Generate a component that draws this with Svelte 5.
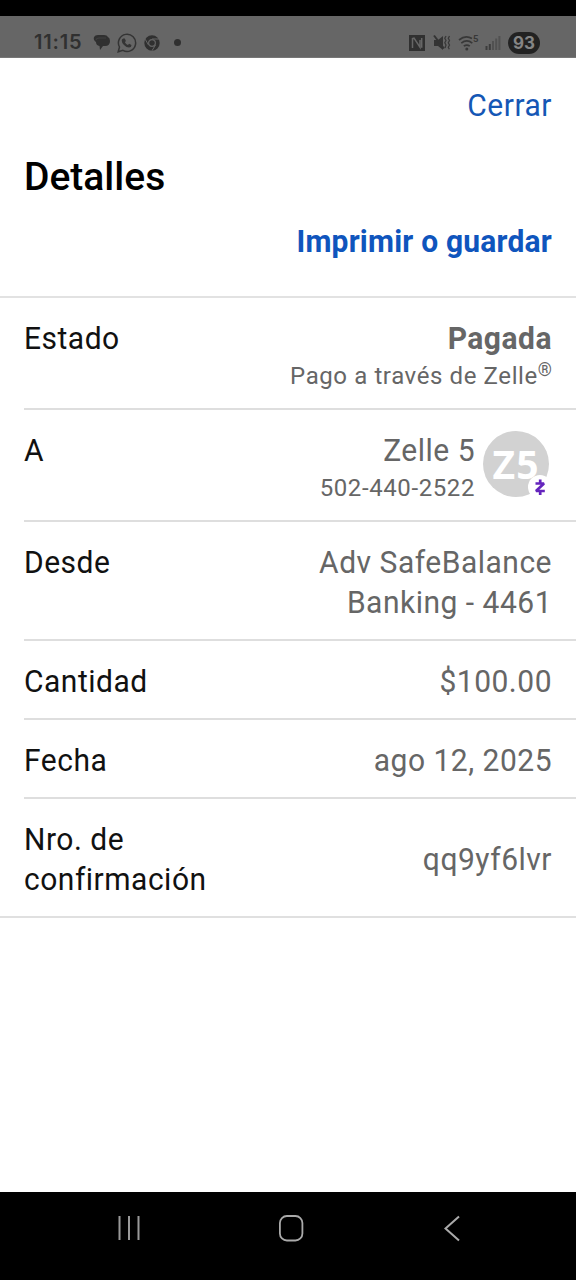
<script>
  const simpleRows = [
    { label: "Cantidad", value: "$100.00", name: "amount" },
    { label: "Fecha", value: "ago 12, 2025", name: "date" },
  ];
</script>

<div class="phone">
  <div class="cutout"></div>
  <header class="status">
    <div class="status-left">
      <span class="time">11:15</span>
      <svg class="chat" width="18" height="18" viewBox="0 0 18 18">
        <path d="M5 1h6q3 0 4 2 2 1 2 4 0 5-5 5h-2l-3 4-.5-4Q3 11.500 3 8 0 6 1 3q1-2 4-2Z" fill="#303030" />
        <path d="M3 6q0-2 3-2h7" fill="none" stroke="#484848" stroke-width=".7" />
      </svg>
      <svg class="whatsapp" width="20" height="20" viewBox="0 0 20 20">
        <path d="M1.200 18.800 2.500 14a8.600 8.600 0 1 1 3.400 3.400Z" fill="none" stroke="#343434" stroke-width="1.500" />
        <path d="m6.300 5.500 1.500-.1 1.100 2.500-1 1.300q1.100 2 3 2.800l1.200-1.200 2.400 1.200q0 2.500-2.500 2.600-2.500-.2-5-2.700-2.400-2.600-2.300-4.500 0-1.200 1.600-1.900Z" fill="#343434" />
      </svg>
      <svg class="chrome" width="16" height="16" viewBox="0 0 16 16">
        <circle cx="8" cy="8" r="5.700" fill="none" stroke="#303030" stroke-width="4" />
        <circle cx="8" cy="8" r="2.800" fill="#303030" />
        <path d="M8 4h7M4.500 10 1.200 4.200M11.500 10 8 15.700" stroke="#666" stroke-width="1" />
        <circle cx="8" cy="8" r="3.600" fill="none" stroke="#606060" stroke-width="1" />
      </svg>
      <span class="dot"></span>
    </div>
    <div class="status-right">
      <svg class="nfc" width="18" height="18" viewBox="0 0 18 18">
        <path d="M1 1h16v16H1Z" fill="#303030" />
        <path d="M4.500 14V4.500l1.500-.3 6 9V6M13.700 4v9.700" fill="none" stroke="#666" stroke-width="1.500" />
      </svg>
      <svg class="mute" width="18" height="18" viewBox="0 0 18 18">
        <path d="M1 6h4l5-4v14l-5-4H1Z" fill="#343434" />
        <path d="m1 1.500 10 13" stroke="#343434" stroke-width="2" />
        <path d="m13 2-1.200 2.300L13 6.500l-1.200 2.300L13 11l-1 3M16.500 2l-1.200 2.300 1.200 2.200-1.200 2.300 1.200 2.200-1.200 2.300 1 2" fill="none" stroke="#383838" stroke-width="1.300" />
      </svg>
      <svg class="wifi" width="22" height="18" viewBox="0 0 22 18">
        <path d="M1 6q6.500-5.500 13-1.500M3.300 9.200q5.500-4.500 11 0M5.800 12.200q3-2.300 6 0" fill="none" stroke="#383838" stroke-width="1.700" />
        <circle cx="8.800" cy="15" r="1.500" fill="#383838" />
        <text x="15" y="8" font-size="9.500" font-weight="700" fill="#383838">5</text>
      </svg>
      <svg class="signal" width="16" height="16" viewBox="0 0 16 16">
        <path d="M1.500 11v4M4.800 9v6" stroke="#3c3c3c" stroke-width="2" />
        <path d="M8 6v9M11.200 3.500V15M14.400 1v14" stroke="#515151" stroke-width="2" />
      </svg>
      <span class="battery">93</span>
    </div>
  </header>

  <main>
    <div class="top">
      <div class="close"><a href="#close">Cerrar</a></div>
      <h1>Detalles</h1>
      <div class="print"><a href="#print">Imprimir o guardar</a></div>
    </div>

    <div class="rows">
      <section class="row">
        <span class="label">Estado</span>
        <div class="value">
          <strong>Pagada</strong>
          <small class="via">Pago a través de Zelle<sup>®</sup></small>
        </div>
      </section>
      <section class="row recipient">
        <span class="label">A</span>
        <div class="value">
          <span>Zelle 5</span>
          <small class="number">502-440-2522</small>
        </div>
        <div class="avatar">
          <span>Z5</span>
          <svg class="badge" width="24" height="24" viewBox="0 0 24 24">
            <circle cx="12" cy="12" r="12" fill="#fff" />
            <path d="M7.500 8.500h8.500L8 16h8.800M12.200 4.500v4M12.200 16v4" fill="none" stroke="#6424bd" stroke-width="2.700" stroke-linejoin="bevel" />
          </svg>
        </div>
      </section>
      <section class="row from">
        <span class="label">Desde</span>
        <div class="value"><span>Adv SafeBalance</span><span class="account">Banking - 4461</span></div>
      </section>
      {#each simpleRows as row}
        <section class="row single">
          <span class="label">{row.label}</span>
          <div class="value"><span class={row.name}>{row.value}</span></div>
        </section>
      {/each}
      <section class="row confirm">
        <span class="label"><span>Nro. de</span><span>confirmación</span></span>
        <div class="value"><span class="code">qq9yf6lvr</span></div>
      </section>
    </div>
  </main>

  <nav>
    <svg width="24" height="26" viewBox="0 0 24 26">
      <path d="M2.500 1v24M12 1v24M21.500 1v24" stroke="#999" stroke-width="2" />
    </svg>
    <svg width="26" height="28" viewBox="0 0 26 28">
      <rect x="0.900" y="2" width="22.500" height="24.500" rx="7" fill="none" stroke="#aaa" stroke-width="1.800" />
    </svg>
    <svg width="18" height="28" viewBox="0 0 18 28">
      <path d="M16 2.500 2.500 14.500 16 26.500" fill="none" stroke="#aaa" stroke-width="2" />
    </svg>
  </nav>
</div>

<style>
  :global(body) {
    margin: 0;
    background: #fff;
  }
  .phone {
    width: 576px;
    height: 1280px;
    display: flex;
    flex-direction: column;
    overflow: hidden;
    font-family: Roboto, sans-serif;
    color: #111;
  }
  .cutout {
    height: 16px;
    background: #000;
  }
  .status {
    height: 42px;
    box-sizing: border-box;
    padding: 11px 36px 0 34px;
    display: flex;
    justify-content: space-between;
    background: #666;
    border-bottom: 1px solid #777;
  }
  .status-left,
  .status-right {
    height: 31px;
    display: flex;
    align-items: center;
  }
  .time {
    width: 59px;
    font-family: Inter, sans-serif;
    font-size: 20px;
    font-weight: 600;
    line-height: 31px;
    letter-spacing: 0.8px;
    color: #303030;
  }
  .whatsapp {
    margin-left: 6px;
  }
  .chrome {
    margin-left: 7px;
  }
  .dot {
    width: 7px;
    height: 7px;
    margin-left: 14px;
    border-radius: 50%;
    background: #303030;
  }
  .mute {
    margin-left: 7px;
  }
  .wifi {
    margin-left: 7px;
  }
  .signal {
    margin-left: 5px;
  }
  .battery {
    width: 32px;
    height: 22px;
    margin-left: 7px;
    border-radius: 11px;
    font: 700 17px/22px Inter, sans-serif;
    text-align: center;
    color: #858585;
    background: #222;
  }

  main {
    height: 1134px;
  }
  .top {
    height: 240px;
    box-sizing: border-box;
    padding: 27px 24px 0;
    border-bottom: 2px solid #e2e2e2;
  }
  a {
    color: #1557b5;
    text-decoration: none;
  }
  .close,
  .print {
    text-align: right;
    font-size: 30px;
    line-height: 40px;
    transform: scaleY(1.05);
    transform-origin: top;
  }
  .close {
    letter-spacing: 0.5px;
  }
  h1 {
    margin: 25px 0 21px;
    font-size: 39px;
    font-weight: 500;
    line-height: 54px;
    color: #000;
  }
  .print {
    margin-top: -4px;
    font-weight: 700;
    letter-spacing: 0.2px;
  }
  .print a {
    color: #0f55bd;
  }
  .rows {
    border-bottom: 2px solid #e0e0e0;
  }
  .row {
    height: 112px;
    box-sizing: border-box;
    margin-left: 24px;
    padding: 20px 24px 0 0;
    display: flex;
    justify-content: space-between;
    align-items: flex-start;
    border-bottom: 2px solid #dedede;
    font-size: 30px;
    line-height: 40px;
    letter-spacing: 0.5px;
  }
  .label {
    flex: 1;
    display: flex;
    flex-direction: column;
  }
  .value {
    display: flex;
    flex-direction: column;
    align-items: flex-end;
    color: #666;
  }
  /* slightly tall letterforms */
  .label,
  .value > span,
  .value > strong {
    transform: scaleY(1.05);
    transform-origin: top;
  }
  .confirm .label {
    transform: none;
  }
  .confirm .label > span {
    transform: scaleY(1.05);
    transform-origin: top;
  }
  strong {
    font-weight: 700;
  }
  small {
    font-size: 24px;
    line-height: 36px;
    letter-spacing: 0.6px;
  }
  sup {
    font-size: 18px;
    line-height: 0;
    vertical-align: 8px;
    letter-spacing: 0;
  }
  .avatar {
    position: relative;
    width: 66px;
    height: 66px;
    margin: 1px 3px 0 8px;
    border-radius: 50%;
    text-align: center;
    font-family: "Open Sans", sans-serif;
    font-size: 39px;
    font-weight: 700;
    line-height: 66px;
    letter-spacing: 1px;
    color: #fff;
    background: #d2d2d2;
  }
  .recipient .value {
    margin-right: 0;
  }
  .badge {
    position: absolute;
    right: -3px;
    bottom: -2px;
  }
  .from {
    height: 119px;
  }
  .single {
    height: 79px;
  }
  .confirm {
    height: 117px;
    border-bottom: 0;
  }
  .confirm .value {
    padding-top: 20px;
  }

  nav {
    height: 88px;
    box-sizing: border-box;
    padding: 22px 115px 38px 117px;
    display: flex;
    align-items: center;
    justify-content: space-between;
    background: #000;
  }
</style>
